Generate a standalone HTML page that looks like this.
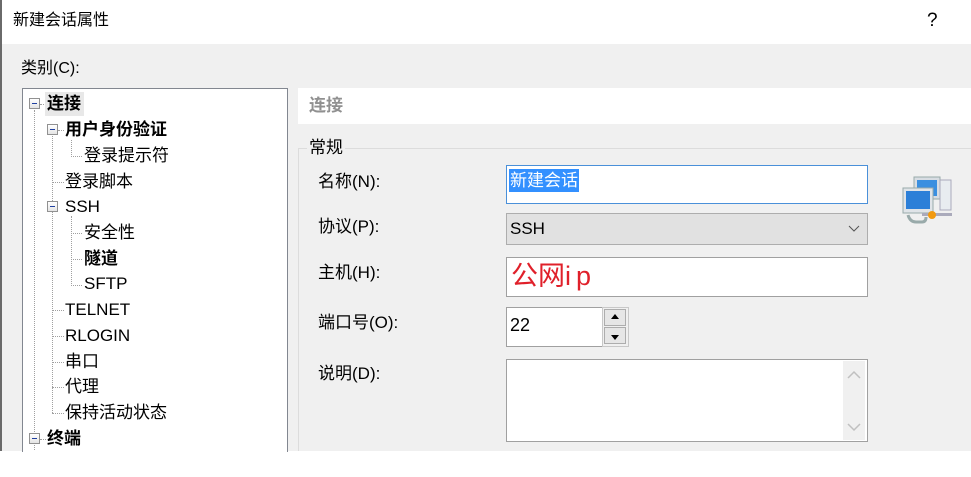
<!DOCTYPE html>
<html><head><meta charset="utf-8"><style>
*{margin:0;padding:0;box-sizing:border-box}
body{width:971px;height:477px;background:#fff;position:relative;overflow:hidden;font-family:"Liberation Sans","Noto Sans CJK SC",sans-serif;color:#000}
.a{position:absolute;white-space:nowrap}
.t{font-size:17px;line-height:20px}
.box{position:absolute;border:1px solid #7a7a7a;background:#fff}
.dv{position:absolute;border-left:1px dotted #a0a0a0;width:0}
.dh{position:absolute;border-top:1px dotted #a0a0a0;height:0}
.pm{position:absolute;width:11px;height:11px;border:1px solid #919191;background:linear-gradient(#fff,#e4e4e4)}
.pm:after{content:"";position:absolute;left:2px;top:4px;width:5px;height:1px;background:#2040a0}
.b{font-weight:bold}
</style></head><body>
<div class="a" style="left:0;top:0;width:2px;height:451px;background:#6a6a6a"></div>
<div class="a t" style="left:13px;top:11px;font-size:16px">新建会话属性</div>
<div class="a t" style="left:927px;top:11px;font-size:19px">?</div>
<div class="a" style="left:2px;top:44px;width:969px;height:407px;background:#f0f0f0"></div>
<div class="a t" style="left:21px;top:59px;font-size:16px">类别(C):</div>
<div class="box" style="left:22px;top:88px;width:266px;height:364px;border-color:#828790;border-bottom:none"></div>
<div class="dv" style="left:34px;top:110px;height:340px"></div>
<div class="dv" style="left:52px;top:136px;height:277px"></div>
<div class="dv" style="left:71px;top:140px;height:17px"></div>
<div class="dv" style="left:71px;top:216px;height:70px"></div>
<div class="dh" style="left:40px;top:104px;width:6px"></div>
<div class="dh" style="left:58px;top:130px;width:6px"></div>
<div class="dh" style="left:71px;top:156px;width:11px"></div>
<div class="dh" style="left:52px;top:182px;width:12px"></div>
<div class="dh" style="left:71px;top:233px;width:11px"></div>
<div class="dh" style="left:71px;top:259px;width:11px"></div>
<div class="dh" style="left:71px;top:285px;width:11px"></div>
<div class="dh" style="left:52px;top:310px;width:12px"></div>
<div class="dh" style="left:52px;top:336px;width:12px"></div>
<div class="dh" style="left:52px;top:362px;width:12px"></div>
<div class="dh" style="left:52px;top:387px;width:12px"></div>
<div class="dh" style="left:52px;top:413px;width:12px"></div>
<div class="dh" style="left:40px;top:439px;width:6px"></div>
<div class="pm" style="left:29px;top:98px"></div>
<div class="pm" style="left:47px;top:124px"></div>
<div class="pm" style="left:47px;top:201px"></div>
<div class="pm" style="left:29px;top:433px"></div>
<div class="a" style="left:45px;top:92px;width:39px;height:24px;background:#e8e8e8"></div>
<div class="a t b" style="left:47px;top:94px">连接</div>
<div class="a t b" style="left:65px;top:120px">用户身份验证</div>
<div class="a t" style="left:84px;top:146px">登录提示符</div>
<div class="a t" style="left:65px;top:172px">登录脚本</div>
<div class="a t" style="left:65px;top:197px">SSH</div>
<div class="a t" style="left:84px;top:223px">安全性</div>
<div class="a t b" style="left:84px;top:249px">隧道</div>
<div class="a t" style="left:84px;top:274px">SFTP</div>
<div class="a t" style="left:65px;top:300px">TELNET</div>
<div class="a t" style="left:65px;top:326px">RLOGIN</div>
<div class="a t" style="left:65px;top:352px">串口</div>
<div class="a t" style="left:65px;top:377px">代理</div>
<div class="a t" style="left:65px;top:403px">保持活动状态</div>
<div class="a t b" style="left:47px;top:429px">终端</div>
<div class="a" style="left:298px;top:88px;width:673px;height:36px;background:#fff"></div>
<div class="a t" style="left:309px;top:96px;color:#909090;font-weight:bold">连接</div>
<div class="a" style="left:298px;top:148px;width:673px;height:1px;background:#dcdcdc"></div>
<div class="a" style="left:298px;top:148px;width:1px;height:303px;background:#dcdcdc"></div>
<div class="a t" style="left:307px;top:138px;background:#f0f0f0;padding:0 2px">常规</div>
<div class="a t" style="left:318px;top:172px">名称(N):</div>
<div class="a t" style="left:318px;top:217px">协议(P):</div>
<div class="a t" style="left:318px;top:263px">主机(H):</div>
<div class="a t" style="left:318px;top:313px">端口号(O):</div>
<div class="a t" style="left:318px;top:364px">说明(D):</div>
<div class="box" style="left:506px;top:165px;width:362px;height:39px;border-color:#4a90d9"></div>
<div class="a t" style="left:509px;top:169px;background:#3390ff;color:#fff;height:23px;line-height:23px;padding:0 1px">新建会话</div>
<div class="box" style="left:506px;top:213px;width:362px;height:32px;background:#e1e1e1;border-color:#adadad"></div>
<div class="a t" style="left:510px;top:219px">SSH</div>
<svg class="a" style="left:848px;top:223px" width="12" height="10"><path d="M1 3 L6 8 L11 3" fill="none" stroke="#555" stroke-width="1"/></svg>
<div class="box" style="left:506px;top:257px;width:362px;height:40px;border-color:#a0a0a0"></div>
<div class="a" style="left:511px;top:260px;font-size:27px;line-height:32px;color:#e0202a">公网<span style="letter-spacing:5px">ip</span></div>
<div class="box" style="left:506px;top:307px;width:97px;height:40px;border-color:#a0a0a0;border-right:none"></div>
<div class="a t" style="left:510px;top:315px;font-size:18px">22</div>
<div class="a" style="left:602px;top:307px;width:27px;height:40px;border:1px solid #c8c8c8;background:#f0f0f0"></div>
<div class="a" style="left:604px;top:309px;width:22px;height:17px;border:1px solid #adadad;background:#e6e6e6"></div>
<div class="a" style="left:604px;top:327px;width:22px;height:17px;border:1px solid #adadad;background:#e6e6e6"></div>
<svg class="a" style="left:609px;top:313px" width="12" height="30"><path d="M2 6 L10 6 L6 1 Z M2 22 L10 22 L6 27 Z" fill="#000"/></svg>
<div class="box" style="left:506px;top:359px;width:362px;height:83px;border-color:#a0a0a0"></div>
<div class="a" style="left:843px;top:361px;width:22px;height:79px;background:#f0f0f0"></div>
<svg class="a" style="left:846px;top:368px" width="16" height="70"><path d="M2 10 L8 4 L14 10 M2 56 L8 62 L14 56" fill="none" stroke="#c0c0c0" stroke-width="1.5"/></svg>
<svg class="a" style="left:900px;top:172px" width="56" height="54">
<rect x="14" y="5" width="26" height="22" fill="#d8dde3" stroke="#9aa"/>
<rect x="17" y="8" width="20" height="16" fill="#3a8fe0"/>
<rect x="40" y="8" width="11" height="30" fill="#e8ecf0" stroke="#aab"/>
<rect x="3" y="16" width="30" height="25" fill="#e0e4e8" stroke="#9aa"/>
<rect x="6" y="19" width="24" height="18" fill="#2b7fd8"/>
<path d="M8 43 Q10 50 16 50 L22 50 Q26 50 26 45" fill="none" stroke="#9aa" stroke-width="3"/>
<rect x="22" y="41" width="30" height="3" fill="#aab"/>
<circle cx="32" cy="43" r="4" fill="#f29a10"/>
</svg>
</body></html>
